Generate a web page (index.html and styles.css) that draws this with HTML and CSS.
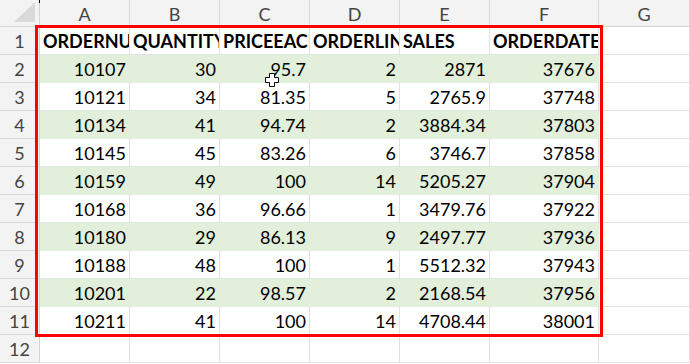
FILE: index.html
```html
<!DOCTYPE html>
<html>
<head>
<meta charset="utf-8">
<link rel="stylesheet" href="styles.css">
</head>
<body>
<div class="sheet">
  <div class="grid">
    <div class="corner"><svg class="tri" width="22" height="21" viewBox="0 0 22 21"><polygon points="21,0 21,20 0,20" fill="#d9d9d9"/></svg></div>
    <div class="ch">A</div><div class="ch">B</div><div class="ch">C</div><div class="ch">D</div><div class="ch">E</div><div class="ch">F</div><div class="ch">G</div><div class="ch last"></div>

    <div class="rh">1</div>
    <div class="c hd">ORDERNUMBER</div><div class="c hd">QUANTITYORDERED</div><div class="c hd">PRICEEACH</div><div class="c hd">ORDERLINENUMBER</div><div class="c hd">SALES</div><div class="c hd">ORDERDATE</div><div class="c"></div><div class="c last"></div>

    <div class="rh">2</div>
    <div class="c n g">10107</div><div class="c n g">30</div><div class="c n g">95.7</div><div class="c n g">2</div><div class="c n g">2871</div><div class="c n g">37676</div><div class="c"></div><div class="c last"></div>

    <div class="rh">3</div>
    <div class="c n">10121</div><div class="c n">34</div><div class="c n">81.35</div><div class="c n">5</div><div class="c n">2765.9</div><div class="c n">37748</div><div class="c"></div><div class="c last"></div>

    <div class="rh">4</div>
    <div class="c n g">10134</div><div class="c n g">41</div><div class="c n g">94.74</div><div class="c n g">2</div><div class="c n g">3884.34</div><div class="c n g">37803</div><div class="c"></div><div class="c last"></div>

    <div class="rh">5</div>
    <div class="c n">10145</div><div class="c n">45</div><div class="c n">83.26</div><div class="c n">6</div><div class="c n">3746.7</div><div class="c n">37858</div><div class="c"></div><div class="c last"></div>

    <div class="rh">6</div>
    <div class="c n g">10159</div><div class="c n g">49</div><div class="c n g">100</div><div class="c n g">14</div><div class="c n g">5205.27</div><div class="c n g">37904</div><div class="c"></div><div class="c last"></div>

    <div class="rh">7</div>
    <div class="c n">10168</div><div class="c n">36</div><div class="c n">96.66</div><div class="c n">1</div><div class="c n">3479.76</div><div class="c n">37922</div><div class="c"></div><div class="c last"></div>

    <div class="rh">8</div>
    <div class="c n g">10180</div><div class="c n g">29</div><div class="c n g">86.13</div><div class="c n g">9</div><div class="c n g">2497.77</div><div class="c n g">37936</div><div class="c"></div><div class="c last"></div>

    <div class="rh">9</div>
    <div class="c n">10188</div><div class="c n">48</div><div class="c n">100</div><div class="c n">1</div><div class="c n">5512.32</div><div class="c n">37943</div><div class="c"></div><div class="c last"></div>

    <div class="rh">10</div>
    <div class="c n g">10201</div><div class="c n g">22</div><div class="c n g">98.57</div><div class="c n g">2</div><div class="c n g">2168.54</div><div class="c n g">37956</div><div class="c"></div><div class="c last"></div>

    <div class="rh">11</div>
    <div class="c n">10211</div><div class="c n">41</div><div class="c n">100</div><div class="c n">14</div><div class="c n">4708.44</div><div class="c n">38001</div><div class="c"></div><div class="c last"></div>

    <div class="rh">12</div>
    <div class="c"></div><div class="c"></div><div class="c"></div><div class="c"></div><div class="c"></div><div class="c"></div><div class="c"></div><div class="c last"></div>
  </div>
  <div class="sel"></div>
  <div class="tick"></div>
  <svg class="cursor" width="14" height="14" viewBox="0 0 14 14"><path d="M4.5 0.5 H9.5 V4.5 H13.5 V9.5 H9.5 V13.5 H4.5 V9.5 H0.5 V4.5 H4.5 Z" fill="#fff" stroke="#000" stroke-width="1"/></svg>
</div>
</body>
</html>
```

FILE: styles.css
```css
* { box-sizing: border-box; }
html, body { margin: 0; padding: 0; background: #fff; }
body { width: 690px; height: 364px; overflow: hidden; font-family: Lato, "Liberation Sans", sans-serif; }

.sheet { position: relative; width: 690px; height: 364px; overflow: hidden; }

.grid {
  display: grid;
  grid-template-columns: 40px 90px 90px 90px 90px 90px 109px 91px 1fr;
  grid-template-rows: 27px repeat(12, 28px);
}

.corner {
  background: #f3f3f3;
  border-right: 1px solid #d4d4d4;
  border-bottom: 1px solid #d4d4d4;
  position: relative;
}
.tri { position: absolute; right: 3px; bottom: 3px; }

.ch {
  background: #f3f3f3;
  border-right: 1px solid #d9d9d9;
  border-bottom: 1px solid #d4d4d4;
  color: #444;
  font-size: 18px;
  display: flex;
  align-items: center;
  justify-content: center;
  padding-top: 1px;
}
.ch.last { border-right: none; }

.rh {
  background: #f3f3f3;
  border-right: 1px solid #d4d4d4;
  border-bottom: 1px solid #dcdcdc;
  color: #444;
  font-size: 18px;
  display: flex;
  align-items: center;
  justify-content: center;
  padding-top: 1px;
}

.c {
  border-right: 1px solid #e1e1e1;
  border-bottom: 1px solid #e1e1e1;
  font-size: 18px;
  color: #000;
  white-space: nowrap;
  overflow: hidden;
  display: flex;
  align-items: center;
  padding: 1px 3px 0 3px;
}
.c.last { border-right: none; }
.hd { font-weight: 700; justify-content: flex-start; }
.n { justify-content: flex-end; }
.g { background: #e2efda; border-color: #e2efda; }

.sel {
  position: absolute;
  left: 35px;
  top: 25px;
  width: 568px;
  height: 312px;
  border: 3px solid #ff0000;
}

.tick {
  position: absolute;
  left: 39px;
  top: 0;
  width: 1px;
  height: 3px;
  background: #000;
}

.cursor { position: absolute; left: 265px; top: 73px; }
```
